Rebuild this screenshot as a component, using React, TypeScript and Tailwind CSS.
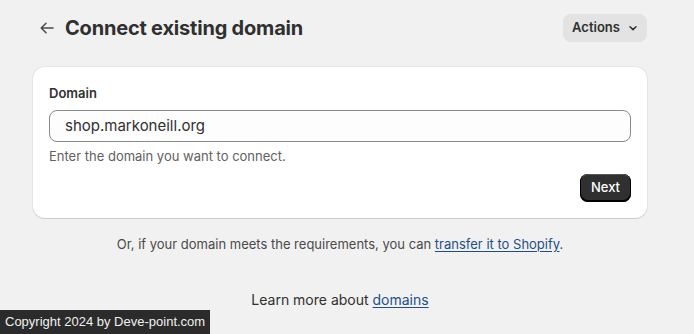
import React from "react";

export default function App() {
  return (
    <div
      className="relative h-[334px] w-[694px] overflow-hidden bg-[#f1f1f1] text-[#303030]"
      style={{ fontFamily: "Inter, 'Noto Sans', sans-serif" }}
    >
      <div className="flex flex-col pl-[33px] pr-[47px] pt-[14px]">
        <div className="flex h-[28px] items-center justify-between">
          <div className="flex items-center">
            <button className="flex h-[28px] w-[28px] items-center justify-center text-[#4a4a4a]">
              <svg width="16" height="16" viewBox="0 0 16 16" fill="none">
                <path d="M14 8H2.5M7 3.2 2.2 8 7 12.8" stroke="currentColor" strokeWidth="1.5" strokeLinecap="round" strokeLinejoin="round" />
              </svg>
            </button>
            <h1 className="ml-[4px] text-[20px] font-bold leading-[28px] tracking-[-0.2px] text-[#303030]">
              Connect existing domain
            </h1>
          </div>
          <button className="flex h-[28px] w-[84px] items-center justify-center gap-[8px] rounded-[8px] bg-[#e3e3e3] text-[13px] font-semibold text-[#303030]">
            Actions
            <svg width="10" height="10" viewBox="0 0 10 10" fill="none">
              <path d="M2 3.8 5 6.6 8 3.8" stroke="currentColor" strokeWidth="1.5" strokeLinecap="round" strokeLinejoin="round" />
            </svg>
          </button>
        </div>

        <div className="mt-[25px] rounded-[12px] bg-white p-[16px] shadow-[0_1px_0_0_rgba(26,26,26,0.12),0_0_0_1px_rgba(26,26,26,0.05)]">
          <div className="text-[13px] font-semibold leading-[20px] text-[#303030]">Domain</div>
          <div className="mt-[7px] flex h-[32px] items-center rounded-[8px] border border-[#8a8a8a] bg-[#fdfdfd] pl-[15px] text-[15px] text-[#303030]">
            shop.markoneill.org
          </div>
          <div className="mt-[4px] text-[13px] leading-[20px] text-[#616161]">
            Enter the domain you want to connect.
          </div>
          <div className="mt-[8px] flex justify-end">
            <button className="flex h-[28px] w-[51px] items-center justify-center rounded-[8px] bg-[#303030] text-[13px] font-medium text-white shadow-[inset_0_-1px_0_1px_#000,inset_0_1px_0_#555]">
              Next
            </button>
          </div>
        </div>

        <p className="mt-[16px] text-center text-[13px] leading-[20px] text-[#4a4a4a]">
          Or, if your domain meets the requirements, you can{" "}
          <a className="text-[#1f4f86] underline underline-offset-2">transfer it to Shopify</a>.
        </p>

        <p className="mt-[36px] text-center text-[14px] leading-[20px] text-[#303030]">
          Learn more about <a className="text-[#1f4f86] underline underline-offset-2">domains</a>
        </p>
      </div>

      <div
        className="absolute bottom-0 left-0 flex h-[24px] items-center whitespace-nowrap bg-[#2b2b2b] pl-[5px] pr-[5px] text-[13px] text-[#f0f0f0]"
        style={{ fontFamily: "'Liberation Sans', Arial, sans-serif" }}
      >
        Copyright 2024 by Deve-point.com
      </div>
    </div>
  );
}
